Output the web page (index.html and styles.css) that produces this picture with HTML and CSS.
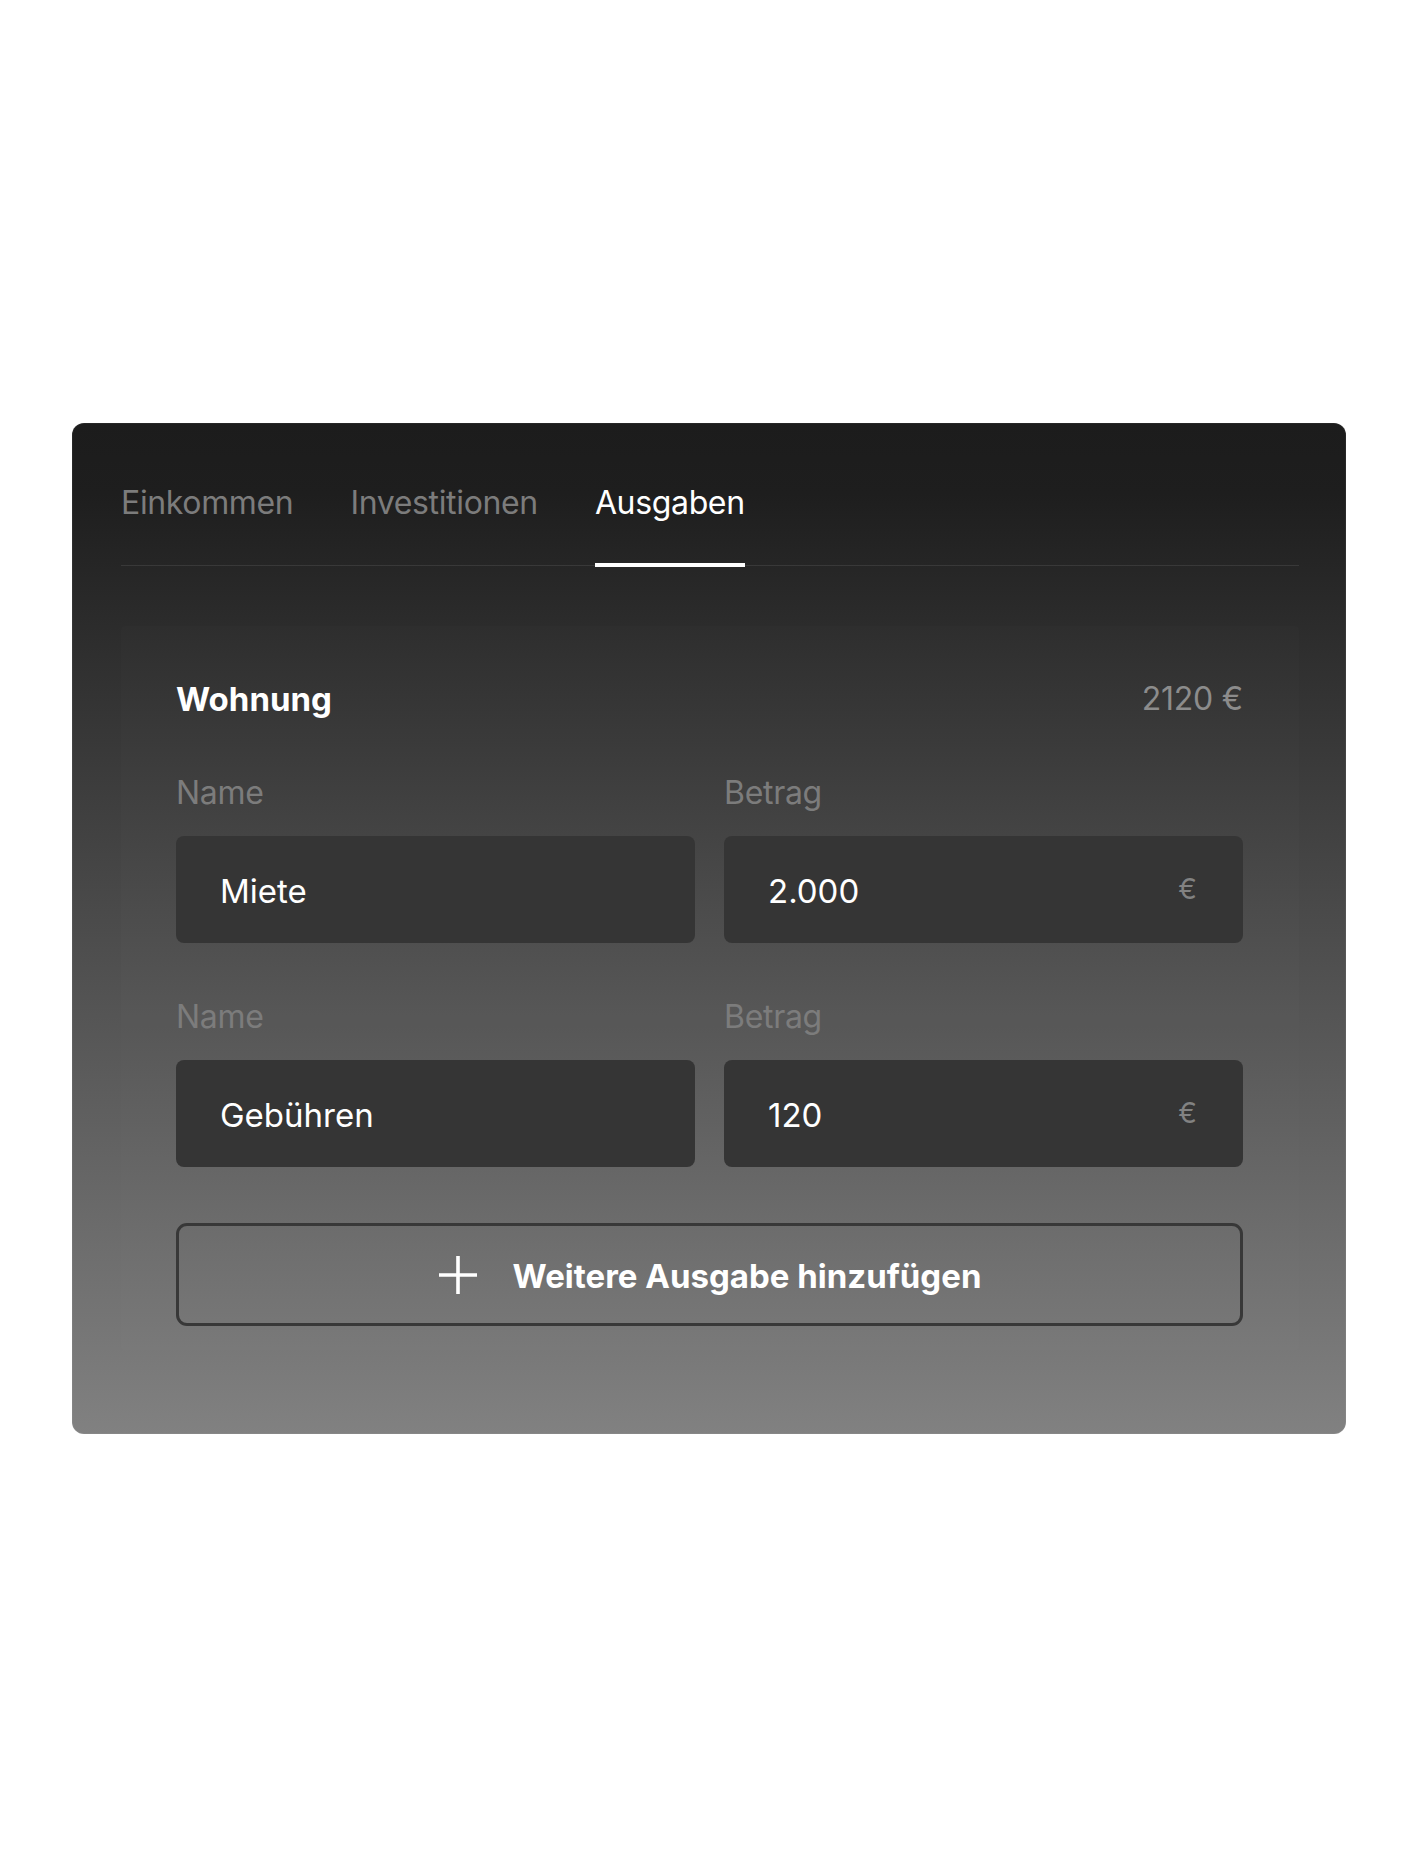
FILE: index.html
```html
<!DOCTYPE html>
<html lang="de">
<head>
  <meta charset="UTF-8" />
  <title>Ausgaben</title>
  <link rel="stylesheet" href="styles.css">
</head>
<body>
  <div class="page">
    <div class="card">
      <nav class="tabs">
        <span class="tab">Einkommen</span>
        <span class="tab">Investitionen</span>
        <span class="tab active">Ausgaben</span>
      </nav>

      <div class="panel">
        <div class="panel-head">
          <span class="panel-title">Wohnung</span>
          <span class="panel-sum">2120 €</span>
        </div>

        <div class="row">
          <div class="field">
            <label>Name</label>
            <div class="input">Miete</div>
          </div>
          <div class="field">
            <label>Betrag</label>
            <div class="input">2.000 <span class="unit">€</span></div>
          </div>
        </div>

        <div class="row">
          <div class="field">
            <label>Name</label>
            <div class="input">Gebühren</div>
          </div>
          <div class="field">
            <label>Betrag</label>
            <div class="input">120 <span class="unit">€</span></div>
          </div>
        </div>

        <button class="add-btn">
          <svg width="40" height="40" viewBox="0 0 40 40">
            <path d="M20 1 V39 M1 20 H39" stroke="#fff" stroke-width="3.6" fill="none" />
          </svg>
          Weitere Ausgabe hinzufügen
        </button>
      </div>
    </div>
  </div>
</body>
</html>
```

FILE: styles.css
```css
body {
  margin: 0;
  background: #fff;
  font-family: "Inter", "Liberation Sans", sans-serif;
}
.page {
  padding: 423px 72px 423px 72px;
}
.card {
  width: 1274px;
  box-sizing: border-box;
  padding: 60px 47px 84px 49px;
  border-radius: 12px;
  background: linear-gradient(180deg, #1c1c1c 0%, #1e1e1e 7%, #818181 100%);
  box-shadow: inset 0 0 0 1px rgba(255, 255, 255, 0.05);
}
.tabs {
  display: flex;
  gap: 57px;
  border-bottom: 1px solid rgba(255, 255, 255, 0.09);
}
.tab {
  font-size: 32px;
  line-height: 40px;
  letter-spacing: -0.35px;
  color: #7c7c7c;
  padding-bottom: 40px;
  border-bottom: 4px solid transparent;
  margin-bottom: -2px;
}
.tab.active {
  color: #fff;
  border-bottom-color: #fff;
}
.panel {
  margin-top: 60px;
  padding: 53px 56px 24px 55px;
  background: rgba(255, 255, 255, 0.012);
  border-radius: 4px;
}
.panel-head {
  display: flex;
  justify-content: space-between;
  font-size: 32px;
  line-height: 40px;
}
.panel-title {
  font-size: 33px;
  font-weight: 700;
  color: #fff;
}
.panel-sum {
  color: #8c8c8c;
  letter-spacing: -0.2px;
}
.row {
  display: grid;
  grid-template-columns: 1fr 1fr;
  gap: 29px;
  margin-top: 54px;
}
label {
  display: block;
  font-size: 32px;
  line-height: 40px;
  color: #7c7c7c;
  letter-spacing: -0.3px;
  margin-bottom: 23px;
}
.input {
  display: flex;
  align-items: center;
  justify-content: space-between;
  height: 107px;
  padding: 2px 46px 0 44px;
  box-sizing: border-box;
  background: #353535;
  border-radius: 8px;
  color: #fff;
  font-size: 33px;
}
.unit {
  color: #828282;
  font-size: 28px;
  margin-top: -4px;
}
.add-btn {
  display: flex;
  align-items: center;
  justify-content: center;
  gap: 35px;
  width: 100%;
  height: 103px;
  margin-top: 56px;
  padding: 3px 0 0 0;
  background: transparent;
  border: 3px solid #383838;
  border-radius: 11px;
  color: #fff;
  font-family: inherit;
  font-size: 33px;
  font-weight: 700;
  cursor: pointer;
}
.add-btn svg {
  margin-top: -3px;
}
```
